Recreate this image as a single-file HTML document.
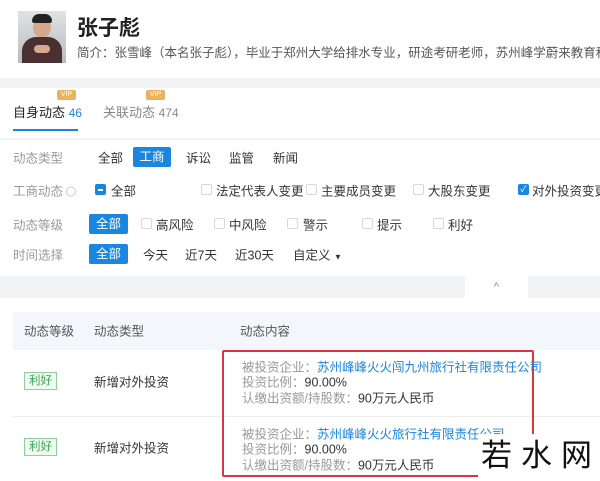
<!DOCTYPE html>
<html><head><meta charset="utf-8"><style>
*{margin:0;padding:0;box-sizing:border-box}
html,body{width:600px;height:481px;overflow:hidden}
body{background:#f3f4f6;font-family:"Liberation Sans","Noto Sans CJK SC",sans-serif;font-size:12.5px;color:#333;position:relative}
#w{position:absolute;left:0;top:0;width:600px;height:481px;overflow:hidden}
.a{position:absolute;white-space:nowrap}
.g{color:#999}
.chip{position:absolute;background:#1a86e0;color:#fff;height:20px;line-height:20px;text-align:center;border-radius:2px}
.cb{position:absolute;width:11px;height:11px;border:1px solid #d8d8d8;background:#fff;border-radius:2px}
.lbl{transform:translateY(-50%)}
</style></head><body><div id="w">
<div class="a" style="left:0;top:0;width:600px;height:78px;background:#fff"></div>
<div class="a" style="left:18px;top:11px;width:48px;height:52px;background:linear-gradient(#dfe3e6,#b8bcc0);overflow:hidden">
<div style="position:absolute;left:15px;top:6px;width:18px;height:21px;border-radius:50%;background:#d6a88c"></div>
<div style="position:absolute;left:14px;top:3px;width:20px;height:9px;border-radius:10px 10px 3px 3px;background:#222"></div>
<div style="position:absolute;left:4px;top:26px;width:40px;height:30px;border-radius:14px 14px 0 0;background:#4a3030"></div>
<div style="position:absolute;left:16px;top:34px;width:16px;height:8px;border-radius:4px;background:#d6a88c"></div>
</div>
<div class="a" style="left:77px;top:12px;font-size:21px;font-weight:bold;color:#222">张子彪</div>
<div class="a" style="left:77px;top:42px;font-size:12.5px;color:#555">简介：张雪峰（本名张子彪），毕业于郑州大学给排水专业，研途考研老师，苏州峰学蔚来教育科技有限</div>
<div class="a" style="left:0;top:88px;width:600px;height:50px;background:#fff"></div>
<div class="a" style="left:13px;top:102px;font-size:13px;color:#222">自身动态 <span style="color:#1a86e0;font-size:12px">46</span></div>
<div class="a" style="left:103px;top:102px;font-size:13px;color:#888">关联动态 <span style="font-size:12px">474</span></div>
<div class="a" style="left:57px;top:90px;width:19px;height:10px;background:#e8b460;color:#fff;font-size:7px;line-height:10px;text-align:center;border-radius:2px">VIP</div>
<div class="a" style="left:146px;top:90px;width:19px;height:10px;background:#e8b460;color:#fff;font-size:7px;line-height:10px;text-align:center;border-radius:2px">VIP</div>
<div class="a" style="left:13px;top:129px;width:65px;height:2px;background:#1a86e0"></div>
<div class="a" style="left:0;top:140px;width:600px;height:136px;background:#fff"></div>
<div class="a g lbl" style="left:13px;top:157px">动态类型</div>
<div class="a lbl" style="left:98px;top:157px">全部</div>
<div class="chip" style="left:133px;top:147px;width:38px">工商</div>
<div class="a lbl" style="left:186px;top:157px">诉讼</div>
<div class="a lbl" style="left:229px;top:157px">监管</div>
<div class="a lbl" style="left:273px;top:157px">新闻</div>
<div class="a g lbl" style="left:13px;top:190px">工商动态 <span style="display:inline-block;width:10px;height:10px;border:1px solid #ccc;border-radius:50%;vertical-align:-1px"></span></div>
<div class="cb" style="left:95px;top:184px;background:#1a86e0;border-color:#1a86e0"><div style="position:absolute;left:2px;top:4px;width:5px;height:1.5px;background:#fff"></div></div>
<div class="a lbl" style="left:111px;top:190px">全部</div>
<div class="cb" style="left:201px;top:184px"></div><div class="a lbl" style="left:216px;top:190px">法定代表人变更</div>
<div class="cb" style="left:306px;top:184px"></div><div class="a lbl" style="left:321px;top:190px">主要成员变更</div>
<div class="cb" style="left:413px;top:184px"></div><div class="a lbl" style="left:428px;top:190px">大股东变更</div>
<div class="cb" style="left:518px;top:184px;background:#1a86e0;border-color:#1a86e0;color:#fff;font-size:9px;line-height:9px;text-align:center">✓</div><div class="a lbl" style="left:532px;top:190px">对外投资变更</div>
<div class="a g lbl" style="left:13px;top:224px">动态等级</div>
<div class="chip" style="left:89px;top:214px;width:39px">全部</div>
<div class="cb" style="left:141px;top:218px"></div><div class="a lbl" style="left:156px;top:224px">高风险</div>
<div class="cb" style="left:214px;top:218px"></div><div class="a lbl" style="left:229px;top:224px">中风险</div>
<div class="cb" style="left:287px;top:218px"></div><div class="a lbl" style="left:303px;top:224px">警示</div>
<div class="cb" style="left:362px;top:218px"></div><div class="a lbl" style="left:377px;top:224px">提示</div>
<div class="cb" style="left:433px;top:218px"></div><div class="a lbl" style="left:448px;top:224px">利好</div>
<div class="a g lbl" style="left:13px;top:254px">时间选择</div>
<div class="chip" style="left:89px;top:244px;width:39px">全部</div>
<div class="a lbl" style="left:143px;top:254px">今天</div>
<div class="a lbl" style="left:185px;top:254px">近7天</div>
<div class="a lbl" style="left:235px;top:254px">近30天</div>
<div class="a lbl" style="left:293px;top:254px">自定义 <span style="font-size:8px">▼</span></div>
<div class="a" style="left:465px;top:276px;width:63px;height:22px;background:#fff;text-align:center;color:#888;font-size:11px;line-height:22px">^</div>
<div class="a" style="left:0;top:298px;width:600px;height:183px;background:#fff"></div>
<div class="a" style="left:13px;top:312px;width:587px;height:38px;background:#f3f7fb"></div>
<div class="a lbl" style="left:24px;top:330px;color:#555">动态等级</div>
<div class="a lbl" style="left:94px;top:330px;color:#555">动态类型</div>
<div class="a lbl" style="left:240px;top:330px;color:#555">动态内容</div>
<div class="a" style="left:13px;top:416px;width:587px;height:1px;background:#eee"></div>
<div class="a" style="left:24px;top:372px;width:33px;height:18px;border:1px solid #8fd19e;background:#f0fbf2;color:#3aa655;font-size:11.5px;line-height:16px;text-align:center">利好</div>
<div class="a" style="left:24px;top:438px;width:33px;height:18px;border:1px solid #8fd19e;background:#f0fbf2;color:#3aa655;font-size:11.5px;line-height:16px;text-align:center">利好</div>
<div class="a lbl" style="left:94px;top:381px">新增对外投资</div>
<div class="a lbl" style="left:94px;top:447px">新增对外投资</div>
<div class="a" style="left:222px;top:350px;width:312px;height:127px;border:2px solid #d9383a;border-radius:2px"></div>
<div class="a lbl" style="left:242px;top:366px"><span class="g">被投资企业：</span><span style="color:#1a86e0">苏州峰峰火火闯九州旅行社有限责任公司</span></div>
<div class="a lbl" style="left:242px;top:381px"><span class="g">投资比例：</span>90.00%</div>
<div class="a lbl" style="left:242px;top:397px"><span class="g">认缴出资额/持股数：</span>90万元人民币</div>
<div class="a lbl" style="left:242px;top:433px"><span class="g">被投资企业：</span><span style="color:#1a86e0">苏州峰峰火火旅行社有限责任公司</span></div>
<div class="a lbl" style="left:242px;top:448px"><span class="g">投资比例：</span>90.00%</div>
<div class="a lbl" style="left:242px;top:464px"><span class="g">认缴出资额/持股数：</span>90万元人民币</div>
<div class="a" style="left:478px;top:434px;width:122px;height:47px;background:#fff"></div>
<div class="a" style="left:481px;top:438px;font-size:31px;color:#111;letter-spacing:9px;line-height:36px">若水网</div>
</div></body></html>
